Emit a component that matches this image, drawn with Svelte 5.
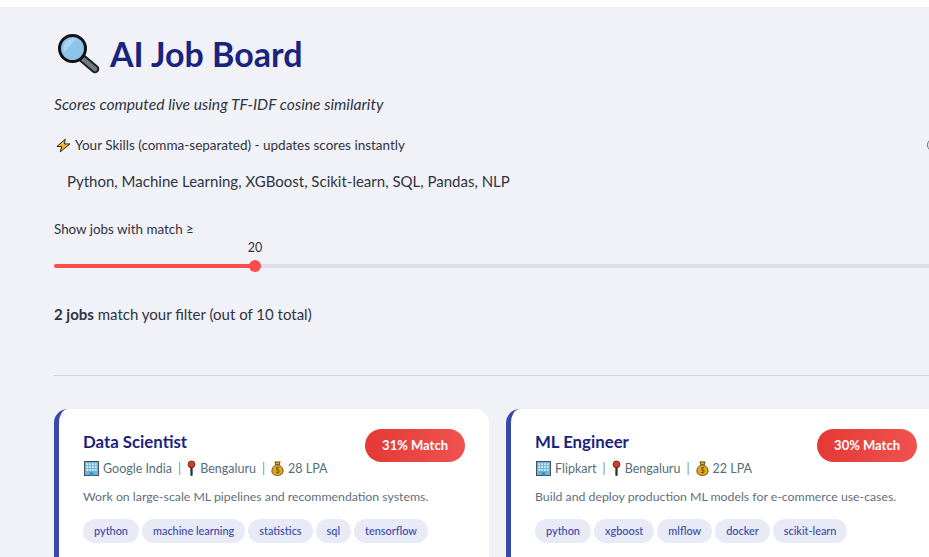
<script>
  const jobs = [
    {
      title: 'Data Scientist', company: 'Google India', city: 'Bengaluru', pay: '28 LPA', score: 31,
      blurb: 'Work on large-scale ML pipelines and recommendation systems.',
      tags: ['python', 'machine learning', 'statistics', 'sql', 'tensorflow']
    },
    {
      title: 'ML Engineer', company: 'Flipkart', city: 'Bengaluru', pay: '22 LPA', score: 30,
      blurb: 'Build and deploy production ML models for e-commerce use-cases.',
      tags: ['python', 'xgboost', 'mlflow', 'docker', 'scikit-learn']
    }
  ];
  let threshold = 20;
</script>

{#snippet building()}
  <svg class="building" width="15" height="15" viewBox="0 0 16 16">
    <rect x="0.5" y="0.5" width="15" height="15" fill="#6fb3d9" stroke="#3c4a52" />
    {#each [2.5, 5.5, 8.5, 11.5] as x}
      {#each [2.5, 5.5, 8.5] as y}
        <rect {x} {y} width="2" height="2" fill="#d3eefa" />
      {/each}
    {/each}
    <rect x="6" y="12" width="4" height="3.5" fill="#2f93cf" />
  </svg>
{/snippet}

{#snippet pin()}
  <svg width="9" height="16" viewBox="0 0 10 17">
    <path d="M5 7v9" stroke="#333" stroke-width="2.6" stroke-linecap="round" />
    <circle cx="5" cy="4.5" r="3.8" fill="#dd3b2a" stroke="#5a1c14" stroke-width="0.9" />
  </svg>
{/snippet}

{#snippet bag()}
  <svg width="13" height="15" viewBox="0 0 14 17">
    <path d="M4 1h6L8.800 4.400C11.600 6 13.400 8.600 13.400 11.400 13.400 14.600 10.600 16.400 7 16.400S.6 14.600 .6 11.400C.6 8.600 2.400 6 5.200 4.400Z" fill="#e2a917" stroke="#4a3a10" stroke-width="0.9" />
    <path d="M4.600 4.400h4.800" stroke="#4a3a10" stroke-width="1" />
    <text x="7" y="13.500" text-anchor="middle" font-size="8" font-family="Lato, sans-serif" fill="#4a3a10">$</text>
  </svg>
{/snippet}

<div class="page">
  <h1>
    <svg class="lens" width="42" height="41" viewBox="0 0 42 41">
      <path d="M24 25l13 11" stroke="#1c1f20" stroke-width="8.500" stroke-linecap="round" />
      <path d="M25 26l12 10" stroke="#6f7d80" stroke-width="4.500" stroke-linecap="round" />
      <circle cx="14.500" cy="15.500" r="13" fill="#8cc4ec" stroke="#111" stroke-width="3" />
      <path d="M6 20a11.500 11.500 0 0 1 12.500-15z" fill="#a9d5f3" />
    </svg>
    AI Job Board
  </h1>
  <p class="sub">Scores computed live using TF-IDF cosine similarity</p>

  <div class="skills-label">
    <span class="lbl">
      <svg class="bolt" width="15" height="15" viewBox="0 0 17 16">
        <path d="M10.500 .8L1 9.200h5.500L4.800 15.200 15.800 6.200H9.500Z" fill="#f7b52c" stroke="#222" stroke-width="1.100" stroke-linejoin="round" />
      </svg>
      Your Skills (comma-separated) - updates scores instantly
    </span>
    <span class="help"></span>
  </div>
  <input class="skills" value="Python, Machine Learning, XGBoost, Scikit-learn, SQL, Pandas, NLP" />

  <div class="slider-label">Show jobs with match ≥</div>
  <div class="slider">
    <span class="val" style="left: {threshold * 10 + 1}px">{threshold}</span>
    <div class="track">
      <div class="fill" style="width: {threshold * 10}px"></div>
      <div class="thumb" style="left: {threshold * 10 + 1}px"></div>
    </div>
  </div>

  <p class="count"><strong>2 jobs</strong> match your filter (out of 10 total)</p>
  <hr />

  <div class="cards">
    {#each jobs as job}
      <article class="card">
        <div class="top">
          <div>
            <h3>{job.title}</h3>
            <div class="meta">
              {@render building()} {job.company} <span class="sep">|</span>
              {@render pin()} {job.city} <span class="sep">|</span>
              {@render bag()} {job.pay}
            </div>
          </div>
          <span class="badge">{job.score}% Match</span>
        </div>
        <p class="blurb">{job.blurb}</p>
        <div class="tags">
          {#each job.tags as tag}
            <span class="tag">{tag}</span>
          {/each}
        </div>
      </article>
    {/each}
  </div>
</div>

<style>
  :global(body) {
    margin: 0;
    background: #fff;
    overflow: hidden;
    height: 557px;
  }

  .page {
    box-sizing: border-box;
    margin-top: 7px;
    width: 995px;
    height: 550px;
    overflow: hidden;
    padding: 20px 54px 0;
    background: #f0f2f8;
    color: #31333f;
    font-family: Lato, "Noto Sans", sans-serif;
  }

  h1 {
    display: flex;
    align-items: center;
    gap: 10px;
    margin: 0;
    height: 52px;
    font-size: 34px;
    font-weight: 700;
    color: #1a237e;
  }

  .lens {
    margin-left: 4px;
  }

  .sub {
    margin: 14px 0 0;
    height: 22px;
    line-height: 22px;
    font-size: 15.650px;
    font-style: italic;
  }

  .skills-label {
    display: flex;
    justify-content: space-between;
    align-items: center;
    margin-top: 20px;
    height: 20px;
    font-size: 13.500px;
  }

  .lbl {
    display: flex;
    align-items: center;
    gap: 4px;
  }

  .bolt {
    margin-left: 2px;
  }

  .help {
    width: 12px;
    height: 12px;
    border: 1px solid #6b6f7b;
    border-radius: 50%;
  }

  .skills {
    display: block;
    box-sizing: border-box;
    width: 100%;
    height: 40px;
    margin-top: 6px;
    padding: 0 13px;
    border: 0;
    outline: 0;
    background: transparent;
    color: #31333f;
    font: inherit;
    font-size: 15px;
  }

  .slider-label {
    margin-top: 18px;
    height: 21px;
    line-height: 20px;
    font-size: 13.400px;
  }

  .slider {
    position: relative;
    height: 34px;
  }

  .val {
    position: absolute;
    top: 0;
    transform: translateX(-50%);
    font-size: 12.500px;
  }

  .track {
    position: absolute;
    top: 24px;
    left: 0;
    right: 0;
    height: 4px;
    border-radius: 2px;
    background: #dcdfea;
  }

  .fill {
    height: 100%;
    border-radius: 2px;
    background: #ff4b4b;
  }

  .thumb {
    position: absolute;
    top: -4px;
    width: 12px;
    height: 12px;
    margin-left: -6px;
    border-radius: 50%;
    background: #ff4b4b;
  }

  .count {
    margin: 28px 0 0;
    height: 24px;
    line-height: 24px;
    font-size: 15px;
  }

  hr {
    margin: 49px 0 0;
    border: 0;
    border-top: 1px solid #cfd1d6;
  }

  .cards {
    display: grid;
    grid-template-columns: 435px 435px;
    gap: 17px;
    margin-top: 33px;
  }

  .card {
    box-sizing: border-box;
    height: 180px;
    padding: 22px 24px;
    border-left: 5px solid #3949ab;
    border-radius: 14px;
    background: #fff;
  }

  .top {
    display: flex;
    justify-content: space-between;
  }

  h3 {
    margin: 0;
    font-size: 16.800px;
    line-height: 22px;
    color: #1a237e;
  }

  .meta {
    display: flex;
    align-items: center;
    gap: 4px;
    margin-top: 6px;
    height: 18px;
    font-size: 12.500px;
    color: #546e7a;
  }

  .building {
    margin-left: 1px;
  }

  .sep {
    margin: 0 2px;
    color: #78909c;
  }

  .badge {
    height: 33px;
    padding: 0 17px;
    margin-top: -2px;
    line-height: 33px;
    border-radius: 17px;
    background: linear-gradient(90deg, #e53935, #ef5350);
    color: #fff;
    font-size: 13px;
    font-weight: 700;
  }

  .blurb {
    margin: 11px 0 0;
    height: 18px;
    line-height: 18px;
    font-size: 12.300px;
    color: #607080;
  }

  .tags {
    display: flex;
    gap: 3px;
    margin-top: 13px;
  }

  .tag {
    height: 24px;
    padding: 0 11px;
    line-height: 24px;
    border-radius: 12px;
    background: #e8eaf6;
    color: #3949ab;
    font-size: 10.900px;
    font-weight: 500;
  }
</style>
